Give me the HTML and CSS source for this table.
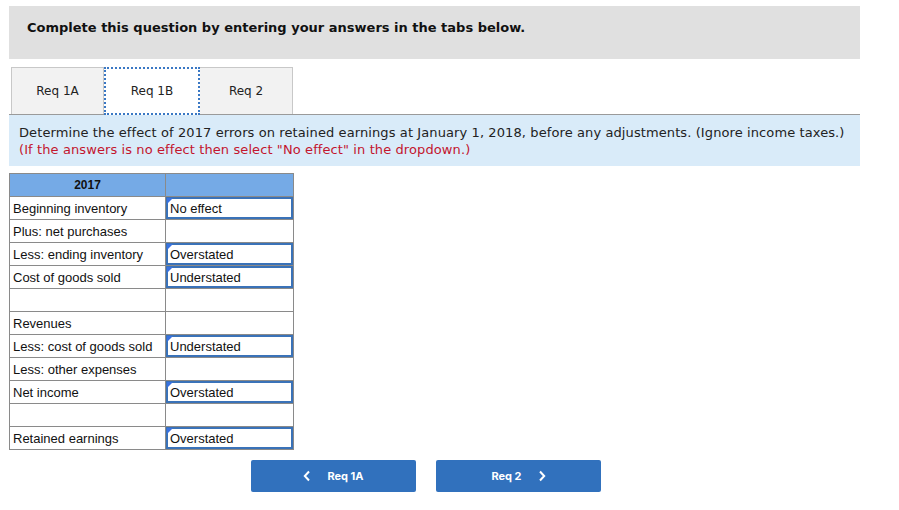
FILE: index.html
```html
<!DOCTYPE html>
<html>
<head>
<meta charset="utf-8">
<link rel="stylesheet" href="styles.css">
</head>
<body>
<div class="page">
  <div class="instr">Complete this question by entering your answers in the tabs below.</div>
  <div class="tabs">
    <div class="tab">Req 1A</div>
    <div class="tab active">Req 1B</div>
    <div class="tab">Req 2</div>
  </div>
  <div class="question">
    <div>Determine the effect of 2017 errors on retained earnings at January 1, 2018, before any adjustments. (Ignore income taxes.)</div>
    <div class="red">(If the answers is no effect then select "No effect" in the dropdown.)</div>
  </div>
  <table class="grid">
    <tr class="head"><th>2017</th><th></th></tr>
    <tr><td>Beginning inventory</td><td><div class="sel">No effect</div></td></tr>
    <tr><td>Plus: net purchases</td><td></td></tr>
    <tr><td>Less: ending inventory</td><td><div class="sel">Overstated</div></td></tr>
    <tr><td>Cost of goods sold</td><td><div class="sel">Understated</div></td></tr>
    <tr><td></td><td></td></tr>
    <tr><td>Revenues</td><td></td></tr>
    <tr><td>Less: cost of goods sold</td><td><div class="sel">Understated</div></td></tr>
    <tr><td>Less: other expenses</td><td></td></tr>
    <tr><td>Net income</td><td><div class="sel">Overstated</div></td></tr>
    <tr><td></td><td></td></tr>
    <tr><td>Retained earnings</td><td><div class="sel">Overstated</div></td></tr>
  </table>
  <div class="nav">
    <button class="btn"><svg class="chev" width="8" height="12" viewBox="0 0 8 12"><path d="M6 1.5 L1.8 6 L6 10.5" fill="none" stroke="#fff" stroke-width="2"/></svg><span>Req 1A</span></button>
    <button class="btn"><span>Req 2</span><svg class="chev" width="8" height="12" viewBox="0 0 8 12"><path d="M2 1.5 L6.2 6 L2 10.5" fill="none" stroke="#fff" stroke-width="2"/></svg></button>
  </div>
</div>
</body>
</html>
```
FILE: styles.css
```css
html, body { margin: 0; padding: 0; background: #fff; }
.page { width: 851px; padding: 6px 0 0 9px; font-family: "DejaVu Sans", Verdana, sans-serif; color: #222; }
.instr { background: #e0e0e0; height: 53px; box-sizing: border-box; padding: 14px 0 0 18px; font-weight: bold; font-size: 13px; color: #111; line-height: 16px; }
.tabs { display: flex; margin-top: 8px; padding-left: 2px; border-bottom: 1px solid #9a9a9a; height: 47px; }
.tab { width: 93px; box-sizing: border-box; border: 1px solid #c8c8c8; border-bottom: none; background: #f2f2f2; font-size: 12px; display: flex; align-items: center; justify-content: center; color: #222; }
.tab + .tab { border-left: none; }
.tab.active { width: 96px; background: #fff; border: 2px dotted #3a78c4; height: 48px; margin-bottom: -1px; }
.tab.active + .tab { border-left: none; }
.question { background: #d9ebf9; height: 51px; box-sizing: border-box; padding: 9px 0 0 10px; font-size: 13px; line-height: 17px; color: #222; letter-spacing: 0.1px; }
.red { color: #c3162e; }
.grid { border-collapse: collapse; margin-top: 7px; font-family: "Liberation Sans", Arial, sans-serif; font-size: 13px; color: #111; }
.grid td, .grid th { border: 1px solid #8a8a8a; height: 23px; padding: 0; box-sizing: border-box; }
.grid td:first-child, .grid th:first-child { width: 156px; }
.grid td:last-child, .grid th:last-child { width: 128px; }
.grid td:first-child { padding-left: 3px; }
.head th { background: #75aae6; font-weight: bold; font-size: 12px; text-align: center; }
.sel { position: relative; border: 2px solid #3a72b8; height: 22px; box-sizing: border-box; padding: 1px 0 0 2px; line-height: 18px; }
.sel::before { content: ""; position: absolute; left: -1px; top: -1px; border-top: 6px solid #3a72e0; border-right: 6px solid transparent; }
.nav { display: flex; gap: 20px; margin: 10px 0 0 242px; }
.btn { width: 165px; height: 32px; background: #3171bd; border: none; border-radius: 2px; color: #fff; font-family: Inter, Roboto, sans-serif; font-weight: bold; font-size: 11px; display: flex; align-items: center; justify-content: center; gap: 16px; padding: 0; }
.chev { display: block; }
```
